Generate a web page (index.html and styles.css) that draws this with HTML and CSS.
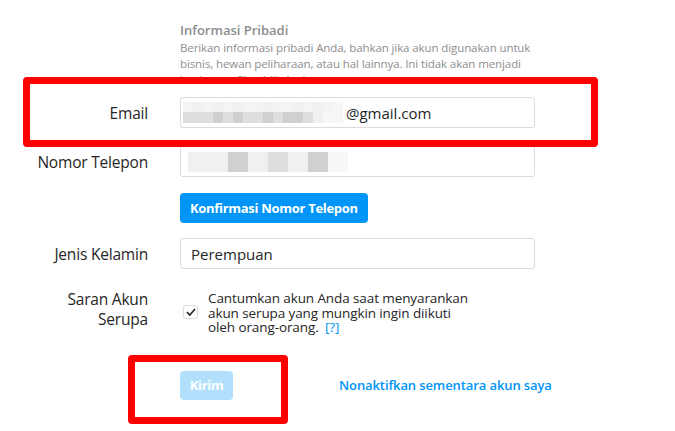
FILE: index.html
```html
<!DOCTYPE html>
<html lang="id">
<head>
    <meta charset="UTF-8">
    <meta name="viewport" content="width=device-width, initial-scale=1.0">
    <title>Edit Profil</title>
    <link rel="stylesheet" href="styles.css">
</head>
<body>
    <div class="page">
        <form class="profile-form" onsubmit="event.preventDefault();">
            <div class="row">
                <div class="label"></div>
                <div class="field">
                    <h2 class="section-title">Informasi Pribadi</h2>
                    <p class="section-desc">
                        Berikan informasi pribadi Anda, bahkan jika akun digunakan untuk<br>
                        bisnis, hewan peliharaan, atau hal lainnya. Ini tidak akan menjadi<br>
                        bagian profil publik Anda.
                    </p>
                </div>
            </div>

            <div class="row row-email">
                <label class="label" for="email">Email</label>
                <div class="field">
                    <div class="input">
                        <span class="blur blur-email">
                            <i></i><i class="g1"></i><i></i><i class="g1"></i><i></i><i class="g1"></i><i></i><i></i><i class="g1"></i><i></i><i></i><i class="g1"></i><i></i><i class="g1"></i><i></i><i class="g0"></i>
                            <i class="g2"></i><i class="g2"></i><i class="g2"></i><i class="g3"></i><i class="g2"></i><i class="g3"></i><i class="g2"></i><i class="g2"></i><i class="g3"></i><i class="g2"></i><i class="g3"></i><i class="g3"></i><i class="g2"></i><i class="g1"></i><i class="g0"></i><i class="g0"></i>
                        </span>
                        <span id="email">@gmail.com</span>
                    </div>
                </div>
            </div>

            <div class="row row-phone">
                <label class="label">Nomor Telepon</label>
                <div class="field">
                    <div class="input">
                        <span class="blur blur-phone">
                            <i class="g1"></i><i class="g1"></i><i class="g3"></i><i class="g1"></i><i class="g2"></i><i class="g1"></i><i class="g3"></i><i class="g0"></i>
                        </span>
                    </div>
                </div>
            </div>

            <div class="row row-confirm">
                <div class="label"></div>
                <div class="field">
                    <button type="button" class="btn-primary">Konfirmasi Nomor Telepon</button>
                </div>
            </div>

            <div class="row row-gender">
                <label class="label">Jenis Kelamin</label>
                <div class="field">
                    <div class="input">Perempuan</div>
                </div>
            </div>

            <div class="row row-suggest">
                <label class="label">Saran Akun<br>Serupa</label>
                <div class="field check-field">
                    <span class="checkbox">
                        <svg width="10" height="8" viewBox="0 0 10 8"><path d="M1 4.2 L3.8 7 L9 1" fill="none" stroke="#262626" stroke-width="1.7"/></svg>
                    </span>
                    <span class="check-text">
                        Cantumkan akun Anda saat menyarankan<br>
                        akun serupa yang mungkin ingin diikuti<br>
                        oleh orang-orang. <a href="#" class="help">[?]</a>
                    </span>
                </div>
            </div>

            <div class="row row-submit">
                <div class="label"></div>
                <div class="field submit-field">
                    <button type="submit" class="btn-primary btn-disabled">Kirim</button>
                    <a href="#" class="deactivate">Nonaktifkan sementara akun saya</a>
                </div>
            </div>
        </form>

        <!-- annotation marks -->
        <div class="mark mark-email"></div>
        <div class="mark mark-submit"></div>
    </div>
</body>
</html>
```

FILE: styles.css
```css
* {
    margin: 0;
    padding: 0;
    box-sizing: border-box;
}

body {
    font-family: 'Open Sans', 'Noto Sans', sans-serif;
    background: #fff;
    color: #262626;
    width: 675px;
    height: 431px;
    overflow: hidden;
}

.page {
    position: relative;
    height: 100%;
}

.profile-form {
    padding-top: 21px;
}

/* rows */
.row {
    display: flex;
    align-items: center;
}

.label {
    width: 148px;
    flex-shrink: 0;
    text-align: right;
    font-size: 15.5px;
    font-weight: 500;
    color: #262626;
    letter-spacing: -0.2px;
}

.field {
    width: 355px;
    margin-left: 32px;
}

/* section header */
.section-title {
    font-size: 13px;
    line-height: 19px;
    font-weight: 600;
    color: #8e8e8e;
}

.section-desc {
    font-size: 11.5px;
    line-height: 16px;
    color: #8e8e8e;
    height: 37px;
    overflow: hidden;
    letter-spacing: -0.1px;
}

.row-email { margin-top: 20px; }
.row-phone { margin-top: 18px; }
.row-confirm { margin-top: 16px; }
.row-gender { margin-top: 15px; }
.row-suggest { margin-top: 20px; align-items: flex-start; }
.row-submit { margin-top: 36px; }

/* inputs */
.input {
    height: 31px;
    border: 1px solid #dbdbdb;
    border-radius: 3px;
    display: flex;
    align-items: center;
    padding-left: 10px;
    font-size: 15px;
    color: #262626;
}

.row-email .input { padding-left: 2px; }
.row-phone .input { padding-left: 7px; }

.blur {
    display: grid;
    flex-shrink: 0;
}

.blur i {
    display: block;
    background: #ededed;
}

.blur .g0 { background: #f7f7f7; }
.blur .g1 { background: #f0f0f0; }
.blur .g2 { background: #dedede; }
.blur .g3 { background: #d0d0d0; }

.blur-email {
    grid-template-columns: repeat(16, 10px);
    grid-template-rows: 10px 11px;
    margin-right: 3px;
}

.blur-email i:not([class]) { background: #f4f4f4; }

.blur-phone {
    grid-template-columns: repeat(8, 20px);
    grid-template-rows: 20px;
}

.blur-phone i:not([class]) { background: #ececec; }

/* buttons */
.btn-primary {
    font-family: inherit;
    background: #0095f6;
    color: #fff;
    border: none;
    border-radius: 4px;
    font-size: 13px;
    font-weight: 700;
    height: 30px;
    padding: 0 10px;
    letter-spacing: -0.3px;
    flex-shrink: 0;
    cursor: pointer;
}

.btn-disabled {
    background: #b2dffc;
    width: 53px;
    height: 29px;
    padding: 0;
}

/* checkbox */
.check-field {
    display: flex;
    align-items: flex-start;
    padding-top: 2px;
}

.checkbox {
    width: 15px;
    height: 14px;
    margin-left: 3px;
    margin-top: 14px;
    border: 1px solid #dbdbdb;
    border-radius: 3px;
    display: flex;
    align-items: center;
    justify-content: center;
    flex-shrink: 0;
}

.check-text {
    margin-left: 10px;
    font-size: 13.5px;
    line-height: 14.5px;
    color: #262626;
    letter-spacing: -0.1px;
}

.help {
    color: #0095f6;
    text-decoration: none;
    margin-left: 3px;
}

.row-suggest .label {
    line-height: 20px;
}

/* submit row */
.submit-field {
    display: flex;
    align-items: center;
    white-space: nowrap;
}

.deactivate {
    margin-left: 106px;
    color: #0095f6;
    font-size: 13px;
    font-weight: 600;
    text-decoration: none;
    letter-spacing: -0.1px;
}

/* red annotation rectangles */
.mark {
    position: absolute;
    border: 7px solid #ff0000;
    border-radius: 4px;
    background: transparent;
}

.mark-email {
    left: 23px;
    top: 77px;
    width: 575px;
    height: 70px;
    background: #fff;
    z-index: 0;
}

.mark-submit {
    left: 128px;
    top: 355px;
    width: 160px;
    height: 69px;
}

.row-email {
    position: relative;
    z-index: 1;
}
```
